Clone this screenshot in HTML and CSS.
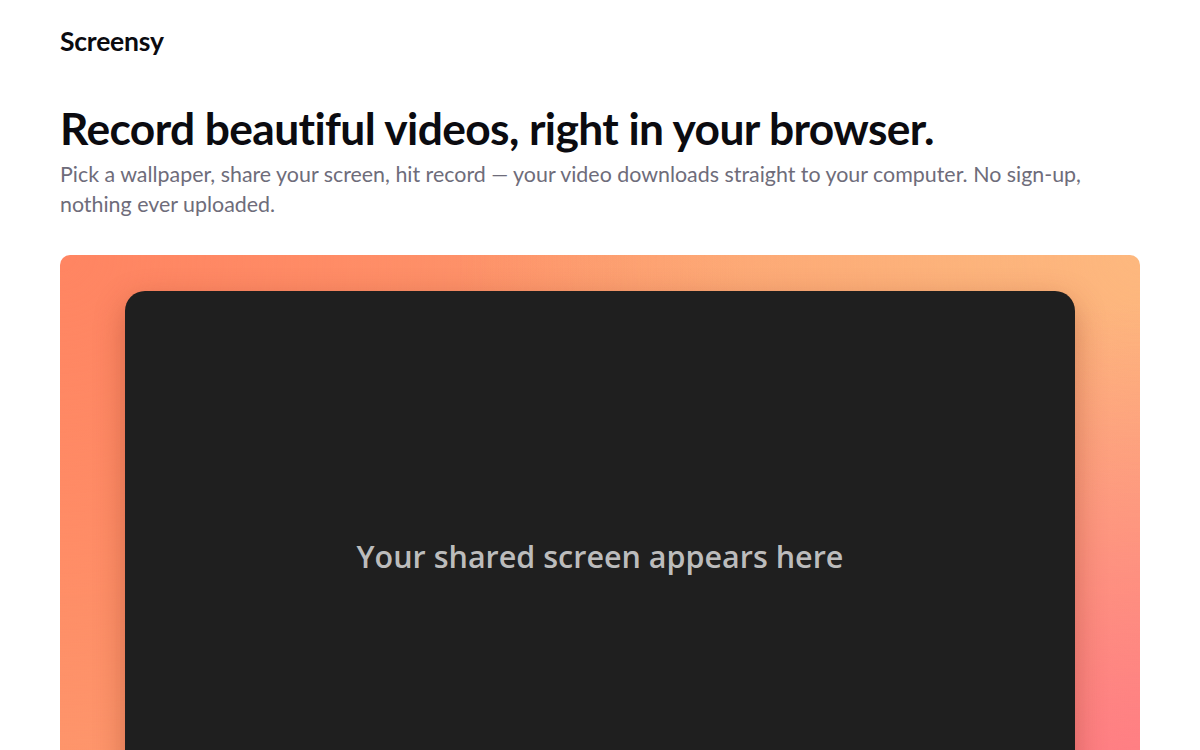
FILE: index.html
```html
<!DOCTYPE html>
<html lang="en">
<head>
  <meta charset="UTF-8">
  <meta name="viewport" content="width=device-width, initial-scale=1.0">
  <title>Screensy</title>
  <link rel="stylesheet" href="styles.css">
</head>
<body>
  <header class="topbar">
    <div class="logo">Screensy</div>
  </header>

  <main class="page">
    <section class="intro">
      <h1>Record beautiful videos, right in your browser.</h1>
      <p>Pick a wallpaper, share your screen, hit record — your video downloads straight to your computer. No sign-up, nothing ever uploaded.</p>
    </section>

    <section class="stage">
      <div class="screen">
        <span class="placeholder">Your shared screen appears here</span>
      </div>
    </section>
  </main>
</body>
</html>
```

FILE: styles.css
```css
body {
  margin: 0;
  font-family: Lato, "Noto Sans", sans-serif;
  color: #0b0b10;
  background: #fff;
}

.topbar {
  padding: 26px 60px 0;
}

.logo {
  font-size: 26.5px;
  font-weight: 700;
  letter-spacing: -0.2px;
  line-height: 30px;
}

.page {
  padding: 0 60px;
}

.intro {
  margin-top: 44px;
}

.intro h1 {
  margin: 0;
  font-size: 44.3px;
  font-weight: 700;
  letter-spacing: -0.6px;
  line-height: 56px;
}

.intro p {
  margin: 3px 0 0;
  font-size: 21.4px;
  line-height: 30px;
  color: #6e6c7a;
  max-width: 1050px;
}

.stage {
  margin-top: 36px;
  padding: 36px 65px;
  border-radius: 10px;
  background:
    radial-gradient(circle at 100% 100%, #ff7885 0%, rgba(255, 120, 133, 0) 45%),
    radial-gradient(circle at 100% 0%, #fdb87e 0%, rgba(253, 184, 126, 0) 55%),
    radial-gradient(circle at 0% 0%, #ff8562 0%, rgba(255, 133, 98, 0) 55%),
    linear-gradient(135deg, #ff9068 0%, #fca473 55%, #ff8a7c 100%);
}

.screen {
  aspect-ratio: 16 / 9;
  background: #1f1f1f;
  border-radius: 20px;
  display: flex;
  align-items: center;
  justify-content: center;
  box-shadow: 0 10px 30px rgba(120, 40, 20, 0.35);
}

.placeholder {
  font-family: "Open Sans", "Noto Sans", sans-serif;
  font-size: 30.5px;
  font-weight: 600;
  color: #bcbcbc;
  margin-top: -4px;
}
```
